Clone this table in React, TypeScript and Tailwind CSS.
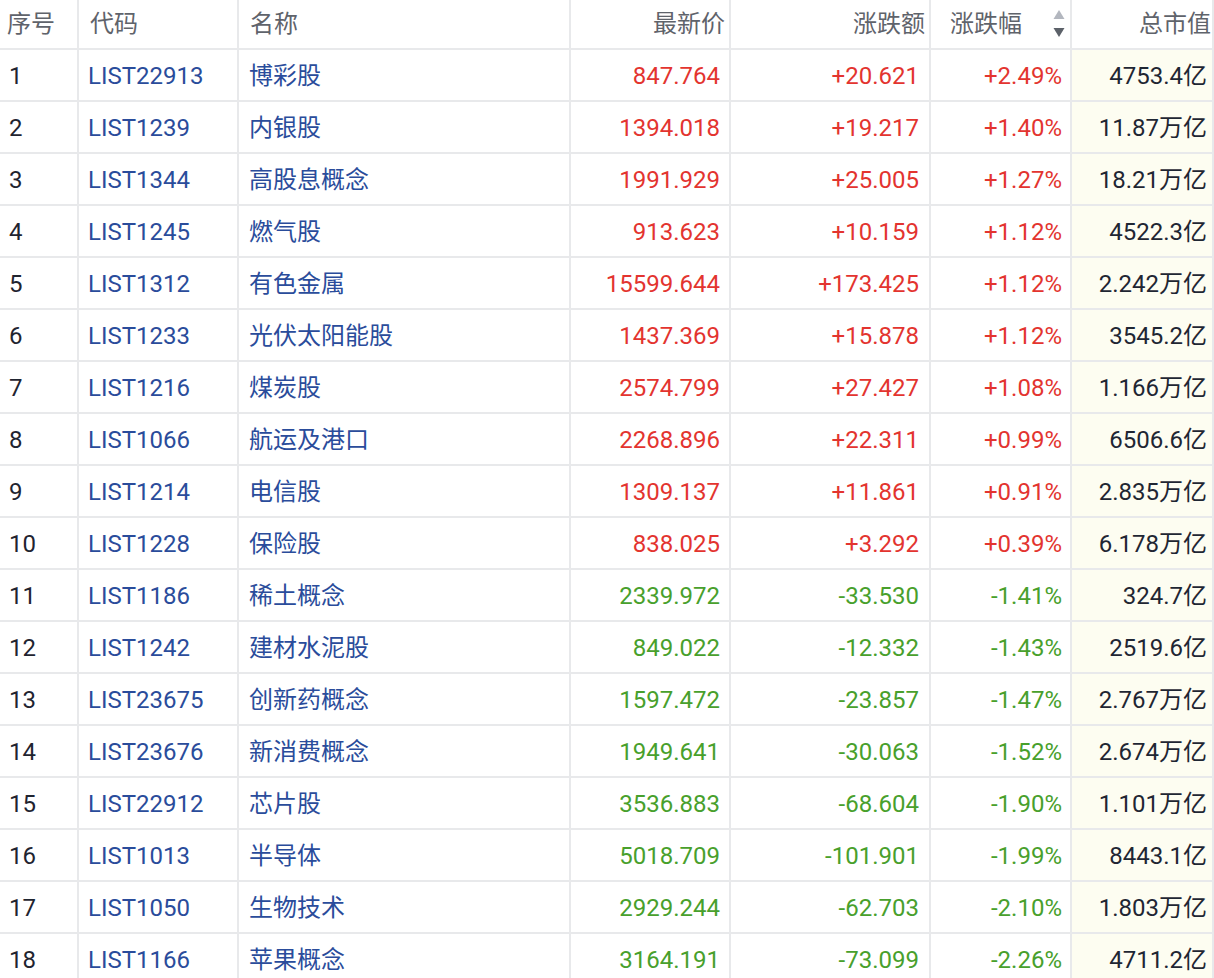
import { ReactNode } from 'react';

interface Row {
  code: string;
  name: string;
  price: string;
  change: string;
  pct: string;
  cap: string;
}

const rows: Row[] = [
  { code: 'LIST22913', name: '博彩股', price: '847.764', change: '+20.621', pct: '+2.49%', cap: '4753.4亿' },
  { code: 'LIST1239', name: '内银股', price: '1394.018', change: '+19.217', pct: '+1.40%', cap: '11.87万亿' },
  { code: 'LIST1344', name: '高股息概念', price: '1991.929', change: '+25.005', pct: '+1.27%', cap: '18.21万亿' },
  { code: 'LIST1245', name: '燃气股', price: '913.623', change: '+10.159', pct: '+1.12%', cap: '4522.3亿' },
  { code: 'LIST1312', name: '有色金属', price: '15599.644', change: '+173.425', pct: '+1.12%', cap: '2.242万亿' },
  { code: 'LIST1233', name: '光伏太阳能股', price: '1437.369', change: '+15.878', pct: '+1.12%', cap: '3545.2亿' },
  { code: 'LIST1216', name: '煤炭股', price: '2574.799', change: '+27.427', pct: '+1.08%', cap: '1.166万亿' },
  { code: 'LIST1066', name: '航运及港口', price: '2268.896', change: '+22.311', pct: '+0.99%', cap: '6506.6亿' },
  { code: 'LIST1214', name: '电信股', price: '1309.137', change: '+11.861', pct: '+0.91%', cap: '2.835万亿' },
  { code: 'LIST1228', name: '保险股', price: '838.025', change: '+3.292', pct: '+0.39%', cap: '6.178万亿' },
  { code: 'LIST1186', name: '稀土概念', price: '2339.972', change: '-33.530', pct: '-1.41%', cap: '324.7亿' },
  { code: 'LIST1242', name: '建材水泥股', price: '849.022', change: '-12.332', pct: '-1.43%', cap: '2519.6亿' },
  { code: 'LIST23675', name: '创新药概念', price: '1597.472', change: '-23.857', pct: '-1.47%', cap: '2.767万亿' },
  { code: 'LIST23676', name: '新消费概念', price: '1949.641', change: '-30.063', pct: '-1.52%', cap: '2.674万亿' },
  { code: 'LIST22912', name: '芯片股', price: '3536.883', change: '-68.604', pct: '-1.90%', cap: '1.101万亿' },
  { code: 'LIST1013', name: '半导体', price: '5018.709', change: '-101.901', pct: '-1.99%', cap: '8443.1亿' },
  { code: 'LIST1050', name: '生物技术', price: '2929.244', change: '-62.703', pct: '-2.10%', cap: '1.803万亿' },
  { code: 'LIST1166', name: '苹果概念', price: '3164.191', change: '-73.099', pct: '-2.26%', cap: '4711.2亿' },
];

const grid = 'grid grid-cols-[79px_160px_332px_160px_200px_141px_142px]';

function Cell({ children, className = '' }: { children?: ReactNode; className?: string }) {
  return (
    <div className={`flex items-center border-r-2 border-[#e8e9eb] ${className}`}>
      {children}
    </div>
  );
}

function SortIcon() {
  return (
    <svg width="12" height="30" viewBox="0 0 12 30" className="shrink-0">
      <path d="M6 1 L11.5 10 L0.5 10 Z" fill="#b3b7bf" />
      <path d="M0.5 19 L11.5 19 L6 28 Z" fill="#5c6169" />
    </svg>
  );
}

export default function App() {
  return (
    <div
      className="w-[1214px] h-[978px] overflow-hidden bg-white text-[24px] leading-none"
      style={{ fontFamily: 'Roboto, "Noto Sans CJK SC", sans-serif' }}
    >
      <div className={`${grid} h-[50px] border-b-2 border-[#e8e9eb] text-[#5f636b]`}>
        <Cell className="pl-[7px]">序号</Cell>
        <Cell className="pl-[11px]">代码</Cell>
        <Cell className="pl-[11px]">名称</Cell>
        <Cell className="justify-end pr-[4px]">最新价</Cell>
        <Cell className="justify-end pr-[4px]">涨跌额</Cell>
        <Cell className="pl-[19px] pr-[5px] justify-between">
          <span>涨跌幅</span>
          <SortIcon />
        </Cell>
        <Cell className="justify-end border-r-0 pr-px">总市值</Cell>
      </div>
      {rows.map((r, i) => {
        const up = r.change.startsWith('+');
        const tone = up ? 'text-[#e3342f]' : 'text-[#48a02c]';
        return (
          <div key={r.code} className={`${grid} h-[52px] border-b-2 border-[#e8e9eb]`}>
            <Cell className="pt-[2px] pl-[9px] text-[#1f2430]">{i + 1}</Cell>
            <Cell className="pt-[2px] pl-[9px] text-[#2a4c9b]">{r.code}</Cell>
            <Cell className="pt-[2px] pl-[10px] text-[#2a4c9b]">{r.name}</Cell>
            <Cell className={`pt-[2px] justify-end pr-[9px] ${tone}`}>{r.price}</Cell>
            <Cell className={`pt-[2px] justify-end pr-[10px] ${tone}`}>{r.change}</Cell>
            <Cell className={`pt-[2px] justify-end pr-[8px] ${tone}`}>{r.pct}</Cell>
            <Cell className="pt-[2px] justify-end border-r-0 pr-[5px] bg-[#fdfdf1] text-[#1f2633]">{r.cap}</Cell>
          </div>
        );
      })}
    </div>
  );
}
